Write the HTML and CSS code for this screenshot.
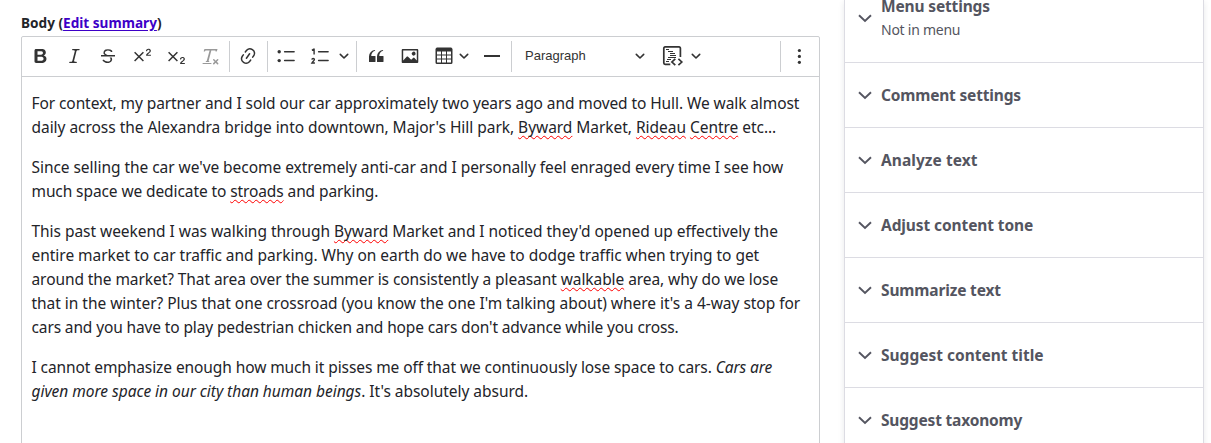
FILE: index.html
```html
<!DOCTYPE html>
<html lang="en">
<head>
<meta charset="utf-8">
<title>Edit content</title>
<link rel="stylesheet" href="styles.css">
</head>
<body>
<svg class="defs" width="0" height="0">
  <symbol id="arrow" viewBox="0 0 10 10"><path d="M1.3 3.4 5 7l3.7-3.6" fill="none" stroke="#333" stroke-width="1.6" stroke-linecap="round" stroke-linejoin="round"/></symbol>
  <symbol id="chevron" viewBox="0 0 14 14"><path d="m1 4.2 6 5.7 6-5.7" fill="none" stroke="#545560" stroke-width="1.9"/></symbol>
  <symbol id="two" viewBox="0 0 20 20"><path d="M15.677 8.678h2.549c.254 0 .447.05.58.152a.49.49 0 0 1 .201.413.54.54 0 0 1-.159.393c-.105.108-.266.162-.48.162h-3.594c-.245 0-.435-.066-.572-.197a.621.621 0 0 1-.205-.463c0-.114.044-.265.132-.453a1.62 1.62 0 0 1 .288-.444c.433-.436.824-.81 1.172-1.122.348-.312.597-.517.747-.615.267-.183.49-.368.667-.553.177-.185.312-.375.405-.57.093-.194.139-.384.139-.57a1.008 1.008 0 0 0-.554-.917 1.197 1.197 0 0 0-.56-.133c-.426 0-.761.182-1.005.546a2.332 2.332 0 0 0-.164.39 1.609 1.609 0 0 1-.258.488c-.096.114-.237.17-.423.17a.558.558 0 0 1-.405-.156.568.568 0 0 1-.161-.427c0-.218.05-.446.151-.683.101-.238.252-.453.452-.646s.454-.349.762-.467a2.998 2.998 0 0 1 1.081-.178c.498 0 .923.076 1.274.228a1.916 1.916 0 0 1 1.004 1.032 1.984 1.984 0 0 1-.156 1.794c-.2.32-.405.572-.613.754-.208.182-.558.468-1.048.857-.49.39-.826.691-1.008.906a2.703 2.703 0 0 0-.24.309z"/></symbol>
</svg>
<div class="page">
  <main class="main">
    <div class="label">Body (<a href="#">Edit summary</a>)</div>
    <div class="editor">
      <div class="toolbar">
        <div class="group">
          <svg class="icon" viewBox="-.5 0 20 20"><path d="M10.187 17H5.773c-.637 0-1.092-.138-1.364-.415-.273-.277-.409-.718-.409-1.323V4.738c0-.617.14-1.062.419-1.332.279-.27.73-.406 1.354-.406h4.68c.69 0 1.288.041 1.793.124.506.083.96.242 1.36.478.341.197.644.447.906.75a3.262 3.262 0 0 1 .808 2.162c0 1.401-.722 2.426-2.167 3.075C15.05 10.175 16 11.315 16 13.01a3.756 3.756 0 0 1-2.296 3.504 6.1 6.1 0 0 1-1.517.377c-.571.073-1.238.11-2 .11zm-.217-6.217H7v4.087h3.069c1.977 0 2.965-.69 2.965-2.072 0-.707-.256-1.22-.768-1.537-.512-.319-1.277-.478-2.296-.478zM7 5.13v3.619h2.606c.729 0 1.292-.067 1.69-.2a1.6 1.6 0 0 0 .91-.765c.165-.267.247-.566.247-.897 0-.707-.26-1.176-.778-1.409-.519-.232-1.31-.348-2.375-.348H7z"/></svg>
          <svg class="icon" viewBox="-.5 0 20 20"><path d="m9.586 14.633.021.004c-.036.335.095.655.393.962.082.083.173.15.274.201h1.474a.6.6 0 1 1 0 1.2H5.304a.6.6 0 0 1 0-1.2h1.15c.474-.07.809-.182 1.005-.334.157-.122.291-.32.404-.597l2.416-9.55a1.053 1.053 0 0 0-.281-.823 1.12 1.12 0 0 0-.442-.296H8.15a.6.6 0 0 1 0-1.2h6.443a.6.6 0 1 1 0 1.2h-1.195c-.376.056-.65.155-.823.296-.215.175-.423.439-.623.79l-2.366 9.347z"/></svg>
          <svg class="icon" viewBox="0 0 20 20"><path d="M7 16.4c-.8-.4-1.5-.9-2.2-1.5a.6.6 0 0 1-.2-.5l.3-.6h1c1 1.2 2.1 1.7 3.7 1.7 1 0 1.8-.3 2.3-.6.6-.4.6-1.2.6-1.3.2-1.2-.9-2.1-.9-2.1h2.1c.3.7.4 1.2.4 1.7v.8l-.6 1.2c-.6.8-1.1 1-1.6 1.2a6 6 0 0 1-2.4.6c-1 0-1.8-.3-2.5-.6zM6.8 9 6 8.3c-.4-.5-.5-.8-.5-1.6 0-.7.1-1.3.5-1.8.4-.6 1-1 1.6-1.3a6.3 6.3 0 0 1 4.7 0 4 4 0 0 1 1.7 1l.3.7c0 .1.2.4-.2.7-.4.2-.9.1-1 0a3 3 0 0 0-1.2-1c-.4-.2-1-.3-2-.4-.7 0-1.4.2-2 .6-.8.4-1 .8-1 1.5 0 .8.5 1 1.2 1.5.6.4 1.1.7 1.9 1H6.8z"/><path d="M3 10.5V9h14v1.5z"/></svg>
          <svg class="icon" viewBox="0 0 20 20"><use href="#two"/><path d="m2.6 6.2 8.8 8.8M11.4 6.2 2.6 15" class="line"/></svg>
          <svg class="icon" viewBox="0 0 20 20"><use href="#two" y="8.2"/><path d="m2.6 6.2 8.8 8.8M11.4 6.2 2.6 15" class="line"/></svg>
          <svg class="icon off" viewBox="0 0 20 20"><path d="M8.69 14.915c.053.052.173.083.36.093a.366.366 0 0 1 .345.485l-.003.01a.738.738 0 0 1-.697.497h-2.67a.374.374 0 0 1-.353-.496l.013-.038a.681.681 0 0 1 .644-.458c.197-.012.325-.043.386-.093a.28.28 0 0 0 .072-.11L9.592 4.5H6.269c-.359-.017-.609.013-.75.09-.142.078-.289.265-.442.563-.192.29-.516.464-.864.464H4.17a.43.43 0 0 1-.407-.569L4.46 3h13.08l-.62 2.043a.81.81 0 0 1-.775.574h-.114a.486.486 0 0 1-.486-.486c.001-.284-.054-.464-.167-.54-.112-.076-.367-.106-.766-.091h-3.28l-2.68 10.257c-.006.074.007.127.038.158zM3 17h8a.5.5 0 1 1 0 1H3a.5.5 0 1 1 0-1zm11.299 1.17a.75.75 0 1 1-1.06-1.06l1.414-1.415-1.415-1.414a.75.75 0 0 1 1.06-1.06l1.415 1.414 1.414-1.415a.75.75 0 1 1 1.06 1.06l-1.413 1.415 1.414 1.415a.75.75 0 0 1-1.06 1.06l-1.415-1.414-1.414 1.414z"/></svg>
        </div>
        <i class="sep"></i>
        <svg class="icon" viewBox="0 0 20 20"><path d="m11.077 15 .991-1.416a.75.75 0 1 1 1.229.86l-1.148 1.64a.748.748 0 0 1-.217.206 5.251 5.251 0 0 1-8.503-5.955.741.741 0 0 1 .12-.274l1.147-1.639a.75.75 0 1 1 1.228.86L4.933 10.7l.006.003a3.75 3.75 0 0 0 6.132 4.294l.006.004zm5.494-5.335a.748.748 0 0 1-.12.274l-1.147 1.639a.75.75 0 1 1-1.228-.86l.86-1.23a3.75 3.75 0 0 0-6.144-4.301l-.86 1.229a.75.75 0 0 1-1.229-.86l1.148-1.64a.748.748 0 0 1 .217-.206 5.251 5.251 0 0 1 8.503 5.955zm-4.563-2.532a.75.75 0 0 1 .184 1.045l-3.155 4.505a.75.75 0 1 1-1.229-.86l3.155-4.506a.75.75 0 0 1 1.045-.184z"/></svg>
        <i class="sep"></i>
        <div class="group">
          <svg class="icon" viewBox="0 0 20 20"><circle cx="3.2" cy="5.8" r="1.7"/><circle cx="3.2" cy="14.6" r="1.7"/><path class="line" stroke-linecap="round" d="M8.6 5.8h9.5M8.6 14.6h9.5"/></svg>
          <svg class="icon" viewBox="0 0 20 20"><path class="line" stroke-linecap="round" d="M8.6 5.8h9.5M8.6 14.6h9.5"/><path d="M1.9 4.3 3.5 3.2h.6v5.2M1.8 13.6c.3-1.6 2.6-1.5 2.6 0 0 1.1-1.5 1.8-2.5 3.4h3" fill="none" stroke="#333" stroke-width="1.4"/></svg>
        </div>
        <svg class="arrow after-list"><use href="#arrow"/></svg>
        <i class="sep tight"></i>
        <div class="group">
          <svg class="icon" viewBox="0 0 20 20"><path d="M3 10.423a6.5 6.5 0 0 1 6.056-6.408l.038.67C6.448 5.423 5.354 7.663 5.22 10H9c.552 0 .5.432.5.986v4.511c0 .554-.448.503-1 .503h-5c-.552 0-.5-.449-.5-1.003v-4.574zm8 0a6.5 6.5 0 0 1 6.056-6.408l.038.67c-2.646.739-3.74 2.979-3.873 5.315H17c.552 0 .5.432.5.986v4.511c0 .554-.448.503-1 .503h-5c-.552 0-.5-.449-.5-1.003v-4.574z"/></svg>
          <svg class="icon" viewBox="0 0 20 20"><path d="M6.91 10.54c.26-.23.64-.21.88.03l3.36 3.14 2.23-2.06a.64.64 0 0 1 .87 0l2.52 2.97V4.5H3.2v10.12l3.71-4.08zm10.27-7.51c.6 0 1.09.47 1.09 1.05v11.84c0 .59-.49 1.06-1.09 1.06H2.79c-.6 0-1.09-.47-1.09-1.06V4.08c0-.58.49-1.05 1.1-1.05h14.38zm-5.22 5.56a1.96 1.96 0 1 1 3.4-1.96 1.96 1.96 0 0 1-3.4 1.96z"/></svg>
          <svg class="icon" viewBox="0 0 20 20"><path d="M3 5.5v3h4v-3H3zm0 4v3h4v-3H3zm0 4v3h4v-3H3zm5 3h4v-3H8v3zm5 0h4v-3h-4v3zm4-4v-3h-4v3h4zm0-4v-3h-4v3h4zm1.5 8A1.5 1.5 0 0 1 17 18H3a1.5 1.5 0 0 1-1.5-1.5V3c.222-.863 1.068-1.5 2-1.5h13c.932 0 1.778.637 2 1.5v13.5zM12 12.5v-3H8v3h4zm0-4v-3H8v3h4z"/></svg>
        </div>
        <svg class="arrow after-table"><use href="#arrow"/></svg>
        <svg class="icon rule" viewBox="0 0 20 20"><path d="M2 9h16v2H2z"/></svg>
        <i class="sep"></i>
        <div class="heading"><span>Paragraph</span><svg class="arrow"><use href="#arrow"/></svg></div>
        <svg class="icon source" viewBox="0 0 20 20"><path d="M17.4 11V2.2c0-.8-.5-1.3-1.3-1.3H2.1c-.8 0-1.3.5-1.3 1.3v14.8c0 .8.5 1.3 1.3 1.3h5.2M12.3 12.8 8.9 16l3.4 3.2M15.4 12.8l3.4 3.2-3.4 3.2" class="line code"/><path d="M3 3.5h3M5 5.5h5M7 7.5h5M7 9.5h6M5 11.5h8M4 13.5h4M3 15.5h3" fill="none" stroke="#333" stroke-width="1"/></svg>
        <svg class="arrow after-source"><use href="#arrow"/></svg>
        <div class="more"><i class="sep"></i><svg class="icon" viewBox="0 0 20 20"><circle cx="10.4" cy="4.5" r="1.6"/><circle cx="10.4" cy="10.4" r="1.6"/><circle cx="10.4" cy="16.3" r="1.6"/></svg></div>
      </div>
      <div class="content">
        <p><span class="ln l1">For context, my partner and I sold our car approximately two years ago and moved to Hull. We walk almost</span>
        <span class="ln l2">daily across the Alexandra bridge into downtown, Major's Hill park, <u>Byward</u> Market, <u>Rideau</u> <u>Centre</u> etc...</span></p>
        <p><span class="ln l3">Since selling the car we've become extremely anti-car and I personally feel enraged every time I see how</span>
        <span class="ln l4">much space we dedicate to <u>stroads</u> and parking.</span></p>
        <p><span class="ln l5">This past weekend I was walking through <u>Byward</u> Market and I noticed they'd opened up effectively the</span>
        <span class="ln l6">entire market to car traffic and parking. Why on earth do we have to dodge traffic when trying to get</span>
        <span class="ln l7">around the market? That area over the summer is consistently a pleasant <u>walkable</u> area, why do we lose</span>
        <span class="ln l8">that in the winter? Plus that one crossroad (you know the one I'm talking about) where it's a 4-way stop for</span>
        <span class="ln l9">cars and you have to play pedestrian chicken and hope cars don't advance while you cross.</span></p>
        <p><span class="ln l10">I cannot emphasize enough how much it pisses me off that we continuously lose space to cars. <em>Cars are</em></span>
        <span class="ln l11"><em>given more space in our city than human beings</em>. It's absolutely absurd.</span></p>
      </div>
    </div>
  </main>
  <aside class="sidebar">
    <div class="item first"><svg class="chev"><use href="#chevron"/></svg><div><div class="title t0">Menu settings</div><div class="sub">Not in menu</div></div></div>
    <div class="item"><svg class="chev"><use href="#chevron"/></svg><div class="title t1">Comment settings</div></div>
    <div class="item"><svg class="chev"><use href="#chevron"/></svg><div class="title t2">Analyze text</div></div>
    <div class="item"><svg class="chev"><use href="#chevron"/></svg><div class="title t3">Adjust content tone</div></div>
    <div class="item"><svg class="chev"><use href="#chevron"/></svg><div class="title t4">Summarize text</div></div>
    <div class="item"><svg class="chev"><use href="#chevron"/></svg><div class="title t5">Suggest content title</div></div>
    <div class="item"><svg class="chev"><use href="#chevron"/></svg><div class="title t6">Suggest taxonomy</div></div>
  </aside>
</div>
</body>
</html>
```
FILE: styles.css
```css
* { box-sizing: border-box; }
body { margin: 0; background: #fff; color: #232429; font-family: "Noto Sans", "Open Sans", sans-serif; }
.defs { display: block; }
.page { display: flex; height: 443px; overflow: hidden; }
.main { width: 799px; margin-left: 21px; padding-top: 14px; flex: none; }
.label { height: 22px; font-size: 13.6px; line-height: 18px; font-weight: 700; white-space: nowrap; letter-spacing: 0; }
.label a { color: #3d00c7; text-decoration: underline; text-underline-offset: 2px; }
.editor { border: 1px solid #ccced1; border-radius: 2px 2px 0 0; height: 460px; }
.toolbar { display: flex; align-items: center; height: 40px; padding: 0 10px 1px 8px; border-bottom: 1px solid #ccced1; }
.group { display: flex; gap: 14px; }
.icon { width: 20px; height: 20px; flex: none; fill: #333; overflow: visible; }
.off { opacity: .5; }
.line { fill: none; stroke: #333; stroke-width: 1.5; }
.code { stroke-width: 1.7; }
.arrow { width: 10px; height: 10px; flex: none; }
.sep { width: 1px; height: 31px; margin: 0 8px 0 9px; background: #ccced1; flex: none; }
.sep.tight { margin: 0 9px 0 7px; }
.after-list { margin-left: 9px; }
.after-table { margin-left: 5px; }
.rule { margin-left: 13px; }
.heading { display: flex; align-items: center; justify-content: space-between; width: 120px; margin-left: 5px; font: 13px/20px "Liberation Sans", Arial, sans-serif; color: #333; }
.source { margin-left: 18px; }
.after-source { margin-left: 8px; }
.more { display: flex; align-items: center; margin-left: auto; }
.content { padding: 14px 9px 0 9.5px; font-size: 15.5px; line-height: 24px; }
.content p { margin: 0 0 16px; }
.ln { display: block; white-space: nowrap; }
.l1, .l10 { letter-spacing: -0.09px; }
.l2 { letter-spacing: -0.04px; }
.l6 { letter-spacing: -0.025px; }
.l3 { letter-spacing: -0.05px; }
.l8 { letter-spacing: -0.03px; }
.l4 { letter-spacing: -0.1px; }
.l9 { letter-spacing: -0.13px; }
.l5 { letter-spacing: -0.04px; }
.l11 { letter-spacing: -0.03px; }
.l7 { letter-spacing: -0.08px; }
.content u { text-decoration: underline wavy #f00 1.2px; text-underline-offset: 2px; text-decoration-skip-ink: none; }
.sidebar { width: 360px; height: 460px; margin-left: 24px; flex: none; border: 1px solid #dcdce3; border-top: 0; box-shadow: 0 2px 6px rgba(34, 35, 48, .1); color: #545560; }
.item { display: flex; align-items: center; gap: 9px; height: 65px; padding-left: 13px; border-bottom: 1px solid #dcdce3; }
.item.first { height: 63px; padding-bottom: 27px; }
.chev { width: 14px; height: 14px; flex: none; }
.title { font-size: 15.5px; line-height: 24px; font-weight: 700; white-space: nowrap; }
.t0, .t4 { letter-spacing: -0.15px; }
.t1, .t6 { letter-spacing: -0.18px; }
.t2 { letter-spacing: 0.05px; }
.t3 { letter-spacing: -0.1px; }
.t5 { letter-spacing: 0; }
.sub { font-size: 14px; line-height: 23px; letter-spacing: -0.25px; }
```
